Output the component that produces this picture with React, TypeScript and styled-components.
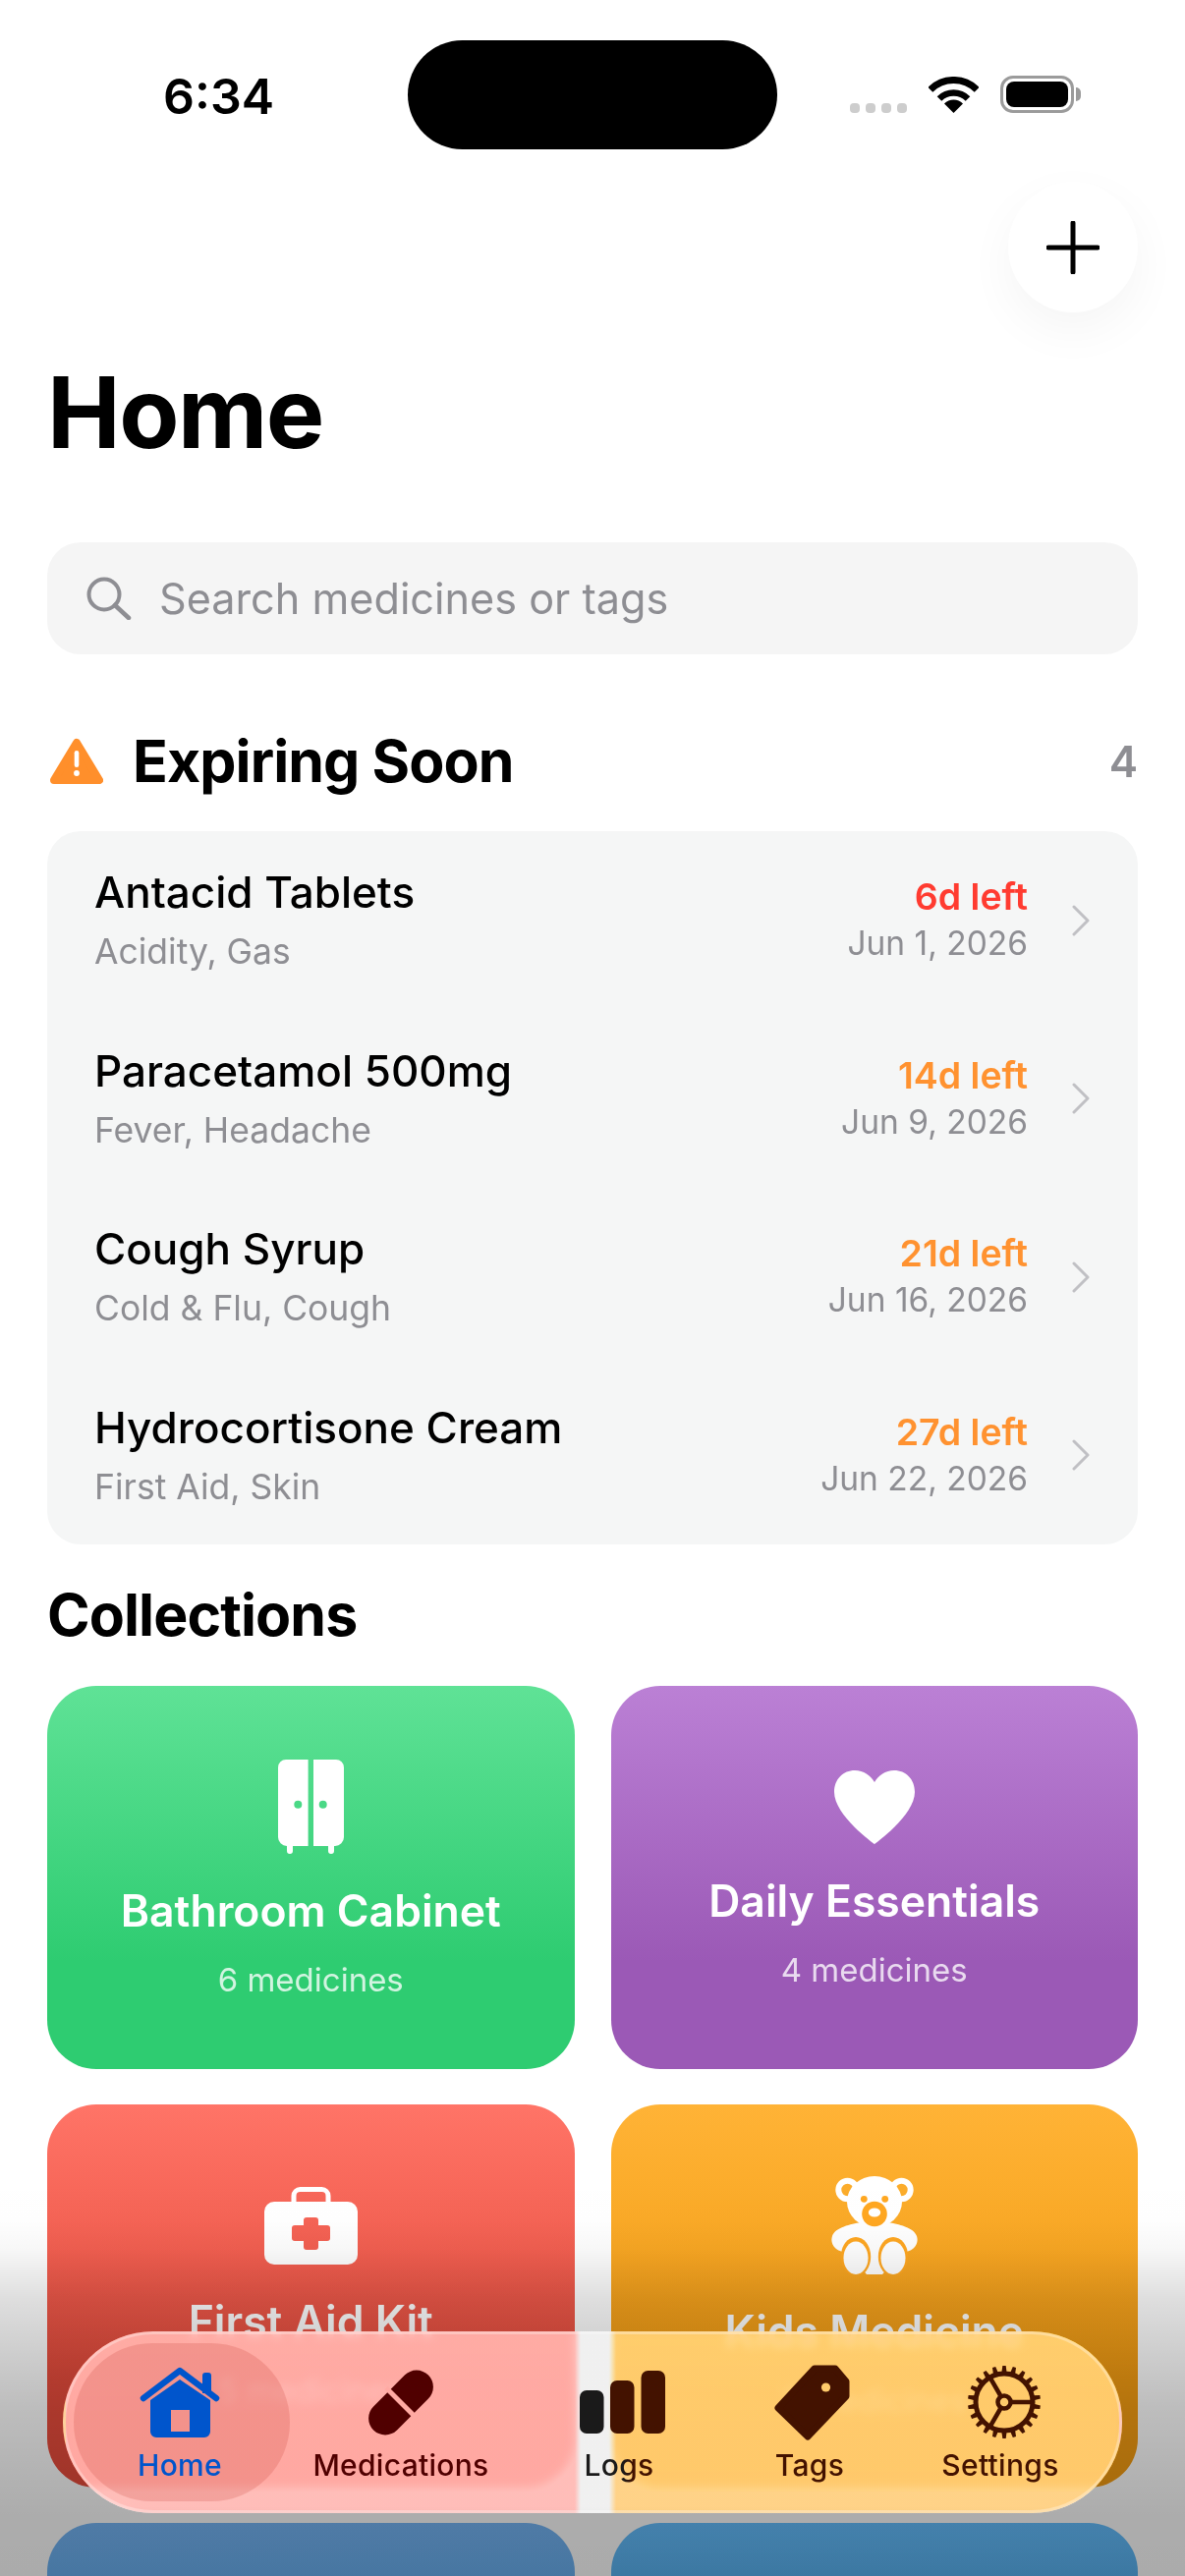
import React from "react";
import styled, { createGlobalStyle } from "styled-components";

const Global = createGlobalStyle`
  html, body { margin: 0; padding: 0; background: #fff; }
  body { font-family: Inter, "Noto Sans", sans-serif; color: #000; }
  * { box-sizing: border-box; }
`;

const Screen = styled.div`
  position: relative;
  width: 1206px;
  height: 2622px;
  overflow: hidden;
  background: #fff;
`;

const StatusBar = styled.div`
  display: grid;
  grid-template-columns: 415px 376px 1fr;
  padding-top: 41px;
  height: 152px;
  align-items: center;
`;
const Time = styled.div`
  padding-left: 166px;
  font-size: 50px;
  line-height: 60px;
  font-weight: 600;
  margin-top: 3px;
`;
const Island = styled.div`
  height: 111px;
  background: #000;
  border-radius: 56px;
`;
const StatusIcons = styled.div`
  display: flex;
  align-items: flex-end;
  padding-left: 74px;
  height: 40px;
  margin-top: -3px;
`;
const SignalDots = styled.div`
  display: flex;
  gap: 6px;
  margin-right: 22px;
`;
const SignalDot = styled.span`
  width: 10px;
  height: 10px;
  border-radius: 4px;
  background: #cdcdcd;
`;
const Battery = styled.div`
  position: relative;
  width: 75px;
  height: 38px;
  margin-left: 22px;
  border: 3px solid #9b9b9b;
  border-radius: 13px;
  padding: 3px;
  &::after {
    content: "";
    position: absolute;
    right: -10px;
    top: 9px;
    width: 5px;
    height: 14px;
    border-radius: 0 5px 5px 0;
    background: #9b9b9b;
  }
`;
const BatteryFill = styled.div`
  height: 100%;
  border-radius: 8px;
  background: #000;
`;

const ActionRow = styled.div`
  display: flex;
  justify-content: flex-end;
  padding: 33px 48px 0;
`;
const AddButton = styled.div`
  width: 132px;
  height: 133px;
  border-radius: 50%;
  background: #fff;
  display: flex;
  align-items: center;
  justify-content: center;
  box-shadow: 0 18px 50px rgba(0, 0, 0, 0.045);
`;

const Title = styled.h1`
  margin: 47px 0 0;
  padding-left: 48px;
  font-size: 100px;
  line-height: 110px;
  font-weight: 700;
  letter-spacing: -1.5px;
`;

const SearchBar = styled.div`
  margin: 77px 48px 0;
  height: 114px;
  border-radius: 34px;
  background: #f5f5f5;
  display: flex;
  align-items: center;
  padding-left: 40px;
  gap: 28px;
`;
const SearchText = styled.span`
  font-size: 43.2px;
  color: #8e8e93;
`;

const SectionHead = styled.div<{ $gap: number }>`
  margin: ${(p) => p.$gap}px 48px 0;
  height: 70px;
  display: flex;
  align-items: center;
`;
const WarningSlot = styled.div`
  display: flex;
  margin-left: 3px;
`;
const SectionTitle = styled.h2<{ $left?: number }>`
  margin: 0 0 0 ${(p) => p.$left ?? 0}px;
  font-size: 59px;
  line-height: 70px;
  font-weight: 700;
  letter-spacing: -0.9px;
`;
const SectionCount = styled.span`
  margin-left: auto;
  font-size: 44px;
  font-weight: 600;
  color: #8e8e93;
`;

const ExpiryCard = styled.div`
  margin: 36px 48px 0;
  border-radius: 34px;
  background: #f5f6f6;
  padding: 0 48px;
`;
const ExpiryRow = styled.div`
  height: 181.5px;
  display: flex;
  align-items: center;
`;
const RowMain = styled.div`
  flex: 1;
  display: flex;
  flex-direction: column;
  gap: 11px;
`;
const RowName = styled.div`
  font-size: 44px;
  line-height: 54px;
  font-weight: 500;
`;
const RowTags = styled.div`
  font-size: 35.5px;
  line-height: 46px;
  color: #8e8e93;
`;
const RowSide = styled.div`
  display: flex;
  flex-direction: column;
  align-items: flex-end;
  gap: 3px;
  margin-right: 44px;
`;
const RowLeft = styled.div<{ $color: string }>`
  font-size: 37.5px;
  line-height: 44px;
  font-weight: 600;
  color: ${(p) => p.$color};
`;
const RowDate = styled.div`
  font-size: 33.5px;
  line-height: 44px;
  color: #8e8e93;
`;

const Grid = styled.div`
  margin: 37px 48px 0;
  display: grid;
  grid-template-columns: 1fr 1fr;
  column-gap: 37px;
  row-gap: 36px;
`;
const Card = styled.div<{ $from: string; $to: string }>`
  height: 390px;
  padding-top: 6px;
  border-radius: 50px;
  background: linear-gradient(180deg, ${(p) => p.$from} 0%, ${(p) => p.$to} 72%);
  display: flex;
  flex-direction: column;
  align-items: center;
  justify-content: center;
  color: #fff;
`;
const CardName = styled.div`
  margin-top: 30px;
  font-size: 44.5px;
  line-height: 56px;
  font-weight: 600;
`;
const CardCount = styled.div`
  margin-top: 20px;
  font-size: 33px;
  line-height: 44px;
  color: rgba(255, 255, 255, 0.78);
`;

const BottomFade = styled.div`
  position: absolute;
  left: 0;
  right: 0;
  bottom: 0;
  height: 422px;
  pointer-events: none;
  background: linear-gradient(
    180deg,
    rgba(0, 0, 0, 0) 0,
    rgba(0, 0, 0, 0.005) 60px,
    rgba(0, 0, 0, 0.03) 90px,
    rgba(0, 0, 0, 0.13) 140px,
    rgba(0, 0, 0, 0.26) 250px,
    rgba(0, 0, 0, 0.325) 360px,
    rgba(0, 0, 0, 0.33) 422px
  );
`;

const TabBar = styled.nav`
  position: absolute;
  left: 64px;
  right: 64px;
  bottom: 64px;
  height: 185px;
  border-radius: 92px;
  padding: 9px 8px;
  border: 3px solid rgba(255, 255, 255, 0.32);
  display: grid;
  grid-template-columns: 220px 226px 218px 170px 218px;
  backdrop-filter: blur(5px) brightness(1.6);
  background: linear-gradient(
    90deg,
    rgba(255, 180, 175, 0.88) 0,
    rgba(255, 180, 175, 0.88) 518px,
    rgba(238, 238, 238, 0.88) 524px,
    rgba(238, 238, 238, 0.88) 553px,
    rgba(255, 204, 119, 0.88) 560px,
    rgba(255, 204, 119, 0.88) 100%
  );
`;
const TabItem = styled.div<{ $active?: boolean }>`
  display: flex;
  flex-direction: column;
  align-items: center;
  padding-top: 20px;
  padding-right: ${(p) => (p.$active ? 4 : 0)}px;
  border-radius: 80px;
  background: ${(p) => (p.$active ? "rgba(200, 70, 60, 0.22)" : "transparent")};
`;
const TabIcon = styled.div<{ $shift?: number }>`
  height: 80px;
  display: flex;
  align-items: center;
  justify-content: center;
  margin-left: ${(p) => p.$shift ?? 0}px;
`;
const TabLabel = styled.span<{ $color: string }>`
  margin-top: 4px;
  font-size: 30px;
  line-height: 40px;
  font-weight: 500;
  letter-spacing: 0.3px;
  color: ${(p) => p.$color};
`;
const LogsLabel = styled(TabLabel)`
  background: linear-gradient(90deg, #1a1a1a 0, #1a1a1a 55%, #431200 70%);
  -webkit-background-clip: text;
  background-clip: text;
  color: transparent;
`;

const WifiIcon = () => (
  <svg width="51" height="37" viewBox="0 0 51 37">
    <path d="M1.8 13.3A33.5 33.5 0 0 1 49.2 13.3" fill="none" stroke="#000" strokeWidth="7" />
    <path d="M11 22.5A20.5 20.5 0 0 1 40 22.5" fill="none" stroke="#000" strokeWidth="6.5" />
    <path d="M25.5 37L16 27.5A13.4 13.4 0 0 1 35 27.5Z" fill="#000" />
  </svg>
);
const PlusIcon = () => (
  <svg width="54" height="54" viewBox="0 0 54 54">
    <path d="M27 2V52M2 27H52" stroke="#000" strokeWidth="5" strokeLinecap="round" />
  </svg>
);
const SearchIcon = () => (
  <svg width="46" height="44" viewBox="0 0 46 44">
    <circle cx="18" cy="18" r="15.5" fill="none" stroke="#8e8e93" strokeWidth="4" />
    <path d="M29 29L43 42" stroke="#8e8e93" strokeWidth="4.5" strokeLinecap="round" />
  </svg>
);
const WarningIcon = () => (
  <svg width="54" height="48" viewBox="0 0 54 48">
    <path d="M27 5L50 43H4Z" fill="#ff8f2b" stroke="#ff8f2b" strokeWidth="8" strokeLinejoin="round" />
    <rect x="24.7" y="13" width="4.6" height="17" rx="2.3" fill="#fff" />
    <circle cx="27" cy="36" r="2.9" fill="#fff" />
  </svg>
);
const Chevron = () => (
  <svg width="20" height="32" viewBox="0 0 20 32">
    <path d="M3 2L17 16L3 30" fill="none" stroke="#c0c0c4" strokeWidth="3" strokeLinecap="round" strokeLinejoin="round" />
  </svg>
);
const CabinetIcon = () => (
  <svg width="67" height="96" viewBox="0 0 67 96">
    <path
      fillRule="evenodd"
      fill="#fff"
      d="M8 0H30.6V88H9A9 9 0 0 1 0 79V8A8 8 0 0 1 8 0ZM20.3 41.7a4 4 0 1 0 0 8a4 4 0 0 0 0-8ZM36 0H59A8 8 0 0 1 67 8V79A9 9 0 0 1 58 88H36ZM45.7 41.7a4 4 0 1 0 0 8a4 4 0 0 0 0-8Z"
    />
    <path d="M9 86H15V93A3 3 0 0 1 9 93ZM51 86H57V93A3 3 0 0 1 51 93Z" fill="#fff" />
  </svg>
);
const HeartIcon = () => (
  <svg width="82" height="75" viewBox="0 0 82 75">
    <path
      fill="#fff"
      d="M41 75C41 75 0 46 0 22C0 9 9 0 21 0C30 0 37 5 41 12C45 5 52 0 61 0C73 0 82 9 82 22C82 46 41 75 41 75Z"
    />
  </svg>
);
const KitIcon = () => (
  <svg width="95" height="79" viewBox="0 0 95 79">
    <path
      d="M30 16V9A6.5 6.5 0 0 1 36.5 2.5H58.5A6.5 6.5 0 0 1 65 9V16"
      fill="none"
      stroke="#fff"
      strokeWidth="5"
    />
    <path
      fillRule="evenodd"
      fill="#fff"
      d="M10 15H85A10 10 0 0 1 95 25V69A10 10 0 0 1 85 79H10A10 10 0 0 1 0 69V25A10 10 0 0 1 10 15ZM43 31A3 3 0 0 0 40 34V39H31A3 3 0 0 0 28 42V52A3 3 0 0 0 31 55H40V61A3 3 0 0 0 43 64H52A3 3 0 0 0 55 61V55H64A3 3 0 0 0 67 52V42A3 3 0 0 0 64 39H55V34A3 3 0 0 0 52 31Z"
    />
  </svg>
);
const BearIcon = () => {
  const bg = "#ffa721";
  return (
    <svg width="88" height="100" viewBox="0 0 88 100">
      <circle cx="16.5" cy="14" r="9.2" fill="none" stroke="#fff" strokeWidth="6" />
      <circle cx="71.5" cy="14" r="9.2" fill="none" stroke="#fff" strokeWidth="6" />
      <ellipse cx="44" cy="26" rx="28" ry="26" fill="#fff" />
      <path
        fill="#fff"
        d="M30 47C20 49 4 52 1 61C-2 70 6 78 16 77L36 100H52L72 77C82 78 90 70 87 61C84 52 68 49 58 47Z"
      />
      <circle cx="33.3" cy="23.3" r="3.4" fill={bg} />
      <circle cx="54.7" cy="23.3" r="3.4" fill={bg} />
      <circle cx="44" cy="38.5" r="12.8" fill={bg} />
      <ellipse cx="44" cy="37" rx="6.2" ry="4.5" fill="#fff" />
      <ellipse cx="25" cy="82" rx="15.2" ry="20" fill={bg} />
      <ellipse cx="63" cy="82" rx="15.2" ry="20" fill={bg} />
      <ellipse cx="25" cy="83.3" rx="12.5" ry="16.7" fill="#fff" />
      <ellipse cx="63" cy="83.3" rx="12.5" ry="16.7" fill="#fff" />
    </svg>
  );
};
const HouseIcon = () => (
  <svg width="82" height="74" viewBox="0 0 82 74">
    <path d="M64 10a3 3 0 0 1 3-3H70a3 3 0 0 1 3 3V28H64Z" fill="#0055cc" />
    <path
      d="M4 33L41 5L78 33"
      fill="none"
      stroke="#0055cc"
      strokeWidth="6.5"
      strokeLinecap="round"
      strokeLinejoin="round"
    />
    <path
      fillRule="evenodd"
      fill="#0055cc"
      d="M11 35L41 14L72 35V67A6 6 0 0 1 66 73H17A6 6 0 0 1 11 67ZM32 45V67H51V45Z"
    />
  </svg>
);
const PillIcon = () => (
  <svg width="66" height="67" viewBox="0 0 66 66">
    <g transform="rotate(45 33 33)">
      <rect x="16" y="-6.5" width="34" height="79" rx="17" fill="#500000" />
    </g>
    <path d="M18 18L48 48" stroke="#ffaaa3" strokeWidth="5" />
  </svg>
);
const BarsIcon = () => (
  <svg width="87" height="64" viewBox="0 0 87 64">
    <rect x="0" y="20" width="24.5" height="44" rx="7" fill="#1a1a1a" />
    <rect x="31" y="10" width="24.5" height="54" rx="7" fill="#431200" />
    <rect x="62.5" y="0" width="24.5" height="64" rx="7" fill="#431200" />
  </svg>
);
const TagIcon = () => (
  <svg width="77" height="77" viewBox="0 0 77 77">
    <path
      d="M41 4H62L73 17V32L34 73L4 44Z"
      fill="#431200"
      stroke="#431200"
      strokeWidth="7"
      strokeLinejoin="round"
    />
    <circle cx="52.5" cy="23" r="4.6" fill="#ffcb6b" />
  </svg>
);
const GearIcon = () => {
  const teeth = Array.from({ length: 22 }, (_, i) => (i * 360) / 22);
  const c = "#431200";
  return (
    <svg width="74" height="74" viewBox="-37 -37 74 74">
      {teeth.map((a) => (
        <path key={a} d="M-2.6 -30L-1.7 -37H1.7L2.6 -30Z" fill={c} transform={`rotate(${a})`} />
      ))}
      <circle r="29" fill="none" stroke={c} strokeWidth="5" />
      <circle r="6.5" fill="none" stroke={c} strokeWidth="4.5" />
      <path d="M8 0H29M-4 -7L-14.5 -25.1M-4 7L-14.5 25.1" stroke={c} strokeWidth="4.5" />
    </svg>
  );
};

const rows = [
  { name: "Antacid Tablets", tags: "Acidity, Gas", left: "6d left", date: "Jun 1, 2026", color: "#ff3b30" },
  { name: "Paracetamol 500mg", tags: "Fever, Headache", left: "14d left", date: "Jun 9, 2026", color: "#ff9230" },
  { name: "Cough Syrup", tags: "Cold & Flu, Cough", left: "21d left", date: "Jun 16, 2026", color: "#ff9230" },
  { name: "Hydrocortisone Cream", tags: "First Aid, Skin", left: "27d left", date: "Jun 22, 2026", color: "#ff9230" },
];

export default function App() {
  return (
    <Screen>
      <Global />
      <StatusBar>
        <Time>6:34</Time>
        <Island />
        <StatusIcons>
          <SignalDots>
            <SignalDot />
            <SignalDot />
            <SignalDot />
            <SignalDot />
          </SignalDots>
          <WifiIcon />
          <Battery>
            <BatteryFill />
          </Battery>
        </StatusIcons>
      </StatusBar>
      <ActionRow>
        <AddButton>
          <PlusIcon />
        </AddButton>
      </ActionRow>
      <Title>Home</Title>
      <SearchBar>
        <SearchIcon />
        <SearchText>Search medicines or tags</SearchText>
      </SearchBar>
      <SectionHead $gap={74}>
        <WarningSlot>
          <WarningIcon />
        </WarningSlot>
        <SectionTitle $left={30}>Expiring Soon</SectionTitle>
        <SectionCount>4</SectionCount>
      </SectionHead>
      <ExpiryCard>
        {rows.map((r) => (
          <ExpiryRow key={r.name}>
            <RowMain>
              <RowName>{r.name}</RowName>
              <RowTags>{r.tags}</RowTags>
            </RowMain>
            <RowSide>
              <RowLeft $color={r.color}>{r.left}</RowLeft>
              <RowDate>{r.date}</RowDate>
            </RowSide>
            <Chevron />
          </ExpiryRow>
        ))}
      </ExpiryCard>
      <SectionHead $gap={37}>
        <SectionTitle>Collections</SectionTitle>
      </SectionHead>
      <Grid>
        <Card $from="#5fe296" $to="#2ecc71">
          <CabinetIcon />
          <CardName>Bathroom Cabinet</CardName>
          <CardCount>6 medicines</CardCount>
        </Card>
        <Card $from="#bb80d5" $to="#9b59b6">
          <HeartIcon />
          <CardName>Daily Essentials</CardName>
          <CardCount>4 medicines</CardCount>
        </Card>
        <Card $from="#ff7467" $to="#e74c3c">
          <KitIcon />
          <CardName>First Aid Kit</CardName>
          <CardCount>5 medicines</CardCount>
        </Card>
        <Card $from="#ffb336" $to="#f39c12">
          <BearIcon />
          <CardName>Kids Medicine</CardName>
          <CardCount>3 medicines</CardCount>
        </Card>
        <Card $from="#76b6f6" $to="#3498db" />
        <Card $from="#65bfff" $to="#2980b9" />
      </Grid>
      <BottomFade />
      <TabBar>
        <TabItem $active>
          <TabIcon>
            <HouseIcon />
          </TabIcon>
          <TabLabel $color="#0055cc">Home</TabLabel>
        </TabItem>
        <TabItem>
          <TabIcon>
            <PillIcon />
          </TabIcon>
          <TabLabel $color="#500000">Medications</TabLabel>
        </TabItem>
        <TabItem>
          <TabIcon $shift={6}>
            <BarsIcon />
          </TabIcon>
          <LogsLabel $color="#1a1a1a">Logs</LogsLabel>
        </TabItem>
        <TabItem>
          <TabIcon $shift={4}>
            <TagIcon />
          </TabIcon>
          <TabLabel $color="#431200">Tags</TabLabel>
        </TabItem>
        <TabItem>
          <TabIcon $shift={7}>
            <GearIcon />
          </TabIcon>
          <TabLabel $color="#431200">Settings</TabLabel>
        </TabItem>
      </TabBar>
    </Screen>
  );
}
